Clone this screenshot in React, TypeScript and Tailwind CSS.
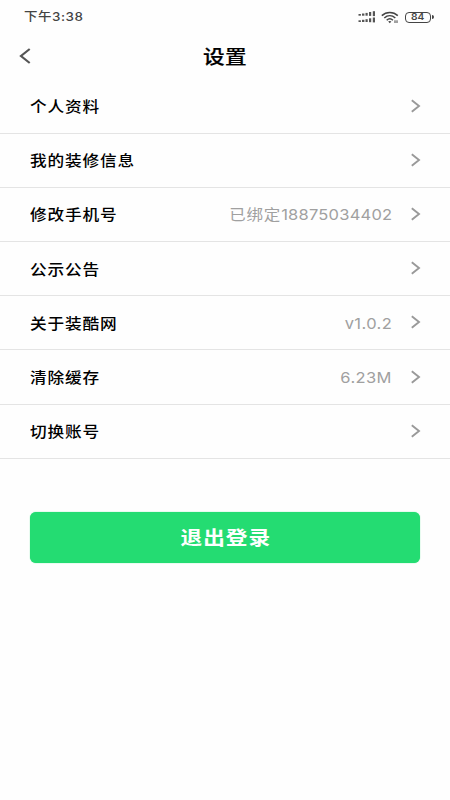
import React from "react";

type Row = { label: string; value?: string; prefix?: string };

const rows: Row[] = [
  { label: "个人资料" },
  { label: "我的装修信息" },
  { label: "修改手机号", prefix: "已绑定", value: "18875034402" },
  { label: "公示公告" },
  { label: "关于装酷网", value: "v1.0.2" },
  { label: "清除缓存", value: "6.23M" },
  { label: "切换账号" },
];

function Signal() {
  return (
    <svg width="18" height="12" viewBox="0 0 18 12" fill="#555">
      {[0, 6.3].map((y) => (
        <g key={y}>
          <rect x="0.5" y={y + 3} width="2.4" height="1.7" />
          <rect x="4" y={y + 2.5} width="2.4" height="2.2" />
          <rect x="7.5" y={y + 1.9} width="2.2" height="2.8" />
          <rect x="11" y={y + 1} width="2.2" height="3.9" />
          <rect x="14.8" y={y + 0.2} width="2.2" height="4.9" />
        </g>
      ))}
    </svg>
  );
}

function Wifi() {
  return (
    <svg width="18" height="13" viewBox="0 0 18 13" fill="none" stroke="#444" strokeWidth="1.5">
      <path d="M0.8 4.6C5.3 0.3 12.3 0.3 16.8 4.6" />
      <path d="M3.3 7C6.6 4 11 4 14.3 7" />
      <path d="M5.7 9.2C7.5 7.5 10.1 7.5 11.9 9.2" />
      <path d="M7.2 10.4L8.8 12.2L10.4 10.4C9.5 9.7 8.1 9.7 7.2 10.4Z" fill="#444" stroke="none" />
      <path d="M14 9.3V12M16 9.3V12" strokeWidth="1" />
    </svg>
  );
}

function Battery() {
  return (
    <div className="flex items-center">
      <div className="flex h-[11px] w-[26px] items-center justify-center rounded-[4px] border-[1.5px] border-[#444]">
        <span className="scale-x-[1.2] pt-px font-['Inter',sans-serif] text-[8.5px] font-semibold leading-none text-[#444]">84</span>
      </div>
      <div className="ml-px h-[4px] w-[1.5px] rounded-r bg-[#444]" />
    </div>
  );
}

export default function App() {
  return (
    <main className="flex h-[800px] w-[450px] flex-col overflow-hidden bg-[#fefefe] font-['Inter','Noto_Sans_CJK_SC',sans-serif]">
      <div className="flex h-[34px] items-center justify-between pl-[24px] pr-[16.5px]">
        <span className="origin-left scale-x-[1.12] whitespace-nowrap text-[12px] font-medium tracking-[0.5px] text-[#444]">下午3:38</span>
        <div className="flex items-center">
          <Signal />
          <div className="ml-[5.5px] mr-[6px]"><Wifi /></div>
          <Battery />
        </div>
      </div>

      <header className="grid h-[46px] grid-cols-[40px_1fr_40px] items-center">
        <svg className="ml-[19px] -mt-[3px]" width="13" height="16" viewBox="0 0 13 16" fill="none" stroke="#555" strokeWidth="2.2">
          <path d="M10.7 1L2 8L10.7 15" />
        </svg>
        <h1 className="scale-x-[1.14] text-center text-[19px] font-medium leading-none tracking-[0.3px] text-black [-webkit-text-stroke:0.2px_black]">设置</h1>
      </header>

      <ul>
        {rows.map((row) => (
          <li key={row.label} className="flex h-[54.1px] items-center border-b border-[#e4e4e4] pl-[30px] pr-[29px]">
            <span className="origin-left scale-x-[1.11] whitespace-nowrap pt-[2px] text-[15px] font-medium tracking-[0.75px] text-black">{row.label}</span>
            <span className="ml-auto origin-right scale-x-[1.1] whitespace-nowrap pt-[2px] text-[15px] text-[#a0a0a0]">
              {row.prefix && <span className="tracking-[0.75px]">{row.prefix}</span>}
              <span className={row.prefix ? "tracking-[0.2px]" : "tracking-[0.35px]"}>{row.value}</span>
            </span>
            <svg className="-mt-[1px] ml-[18px]" width="11" height="14" viewBox="0 0 11 14" fill="none" stroke="#999" strokeWidth="1.9">
              <path d="M1.8 1.3L9 7L1.8 12.7" />
            </svg>
          </li>
        ))}
      </ul>

      <button className="mx-[30px] mt-[53px] flex h-[51px] shrink-0 items-center justify-center rounded-[6px] bg-[#24dc72] shadow-[0_0_1px_#24dc72]">
        <span className="scale-x-[1.14] pl-[1px] pt-[5px] text-[19px] font-bold tracking-[0.9px] text-white">退出登录</span>
      </button>
    </main>
  );
}
